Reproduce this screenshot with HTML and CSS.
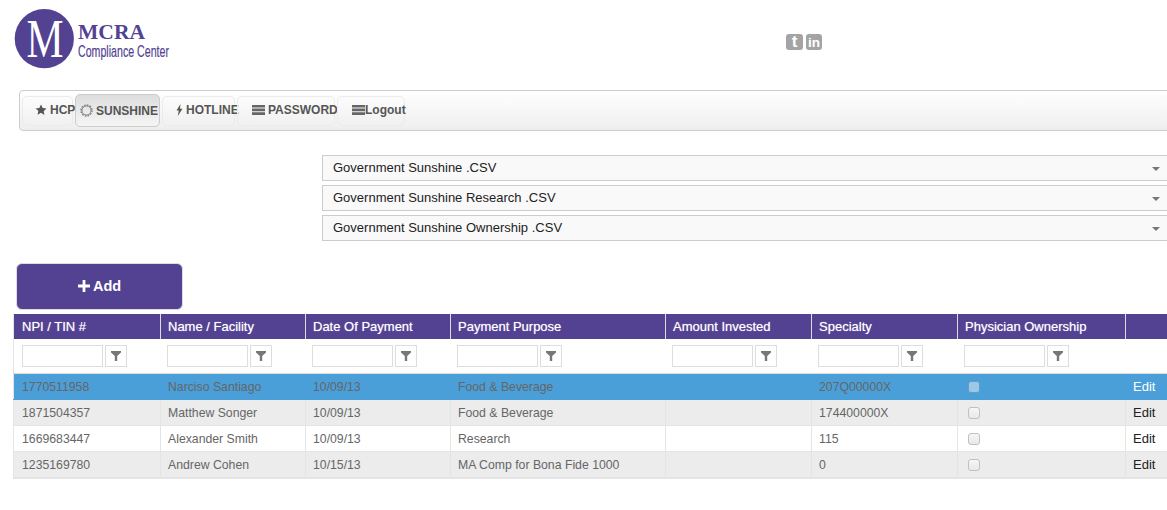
FILE: index.html
```html
<!DOCTYPE html>
<html lang="en">
<head>
  <meta charset="UTF-8">
  <title>MCRA Compliance Center</title>
  <link rel="stylesheet" href="styles.css">
</head>
<body>
  <header class="top">
    <svg class="logo" width="230" height="70" viewBox="0 0 230 70">
      <circle cx="44.3" cy="38.7" r="29.6" fill="#534292"/>
      <text x="45" y="57" text-anchor="middle" textLength="37" lengthAdjust="spacingAndGlyphs" font-family="Liberation Serif" font-size="54" fill="#fff">M</text>
      <text x="78" y="39" textLength="67" lengthAdjust="spacingAndGlyphs" font-family="Liberation Serif" font-weight="bold" font-size="20" fill="#534292">MCRA</text>
      <text x="78" y="56.5" textLength="91" lengthAdjust="spacingAndGlyphs" font-family="Liberation Sans" font-size="17" fill="#534292" stroke="#534292" stroke-width="0.2">Compliance Center</text>
    </svg>
    <div class="social">
      <span class="social-icon icon-twitter">t</span>
      <span class="social-icon icon-linkedin">in</span>
    </div>
  </header>

  <nav class="menu">
    <a class="menu-item item-hcp" href="#">
      <svg width="12" height="12" viewBox="0 0 12 12"><path d="M6 .5l1.7 3.6 3.8.5-2.8 2.6.7 3.9L6 8.8l-3.4 1.9.7-3.9L.5 4.6l3.8-.5z" fill="#555"/></svg>HCP
    </a>
    <a class="menu-item item-sunshine active" href="#">
      <svg width="13" height="13" viewBox="0 0 13 13"><circle cx="6.5" cy="6.5" r="4.6" fill="none" stroke="#777" stroke-width="1"/><circle cx="6.5" cy="6.5" r="5.6" fill="none" stroke="#777" stroke-width="1.2" stroke-dasharray="1.6 1.3"/></svg>SUNSHINE
    </a>
    <a class="menu-item item-hotline" href="#">
      <svg width="7" height="12" viewBox="0 0 7 12"><path d="M4.5 0L0.5 6.5h2.3L1.8 12 6.5 4.8H4z" fill="#555"/></svg>HOTLINE
    </a>
    <a class="menu-item item-password" href="#">
      <svg width="13" height="10" viewBox="0 0 13 10"><path d="M0 0h13v2.6H0zM0 3.6h13v2.6H0zM0 7.2h13V10H0z" fill="#666"/></svg>PASSWORD
    </a>
    <a class="menu-item item-logout" href="#">
      <svg width="13" height="10" viewBox="0 0 13 10"><path d="M0 0h13v2.6H0zM0 3.6h13v2.6H0zM0 7.2h13V10H0z" fill="#666"/></svg>Logout
    </a>
  </nav>

  <section class="exports">
    <div class="export-select">Government Sunshine .CSV<span class="caret"></span></div>
    <div class="export-select">Government Sunshine Research .CSV<span class="caret"></span></div>
    <div class="export-select">Government Sunshine Ownership .CSV<span class="caret"></span></div>
  </section>

  <button class="add-btn" type="button">
    <svg width="12" height="12" viewBox="0 0 12 12"><path d="M4.6 0h2.8v4.6H12v2.8H7.4V12H4.6V7.4H0V4.6h4.6z" fill="#fff"/></svg>Add
  </button>

  <table class="grid">
    <colgroup>
      <col class="col-npi"><col class="col-name"><col class="col-date"><col class="col-purpose">
      <col class="col-amount"><col class="col-spec"><col class="col-owner"><col class="col-edit">
    </colgroup>
    <thead>
      <tr>
        <th>NPI / TIN #</th>
        <th>Name / Facility</th>
        <th>Date Of Payment</th>
        <th>Payment Purpose</th>
        <th>Amount Invested</th>
        <th>Specialty</th>
        <th>Physician Ownership</th>
        <th></th>
      </tr>
      <tr class="filters">
        <td><div class="filter"><input type="text"><span class="filter-btn"><svg width="10" height="10" viewBox="0 0 10 10"><path d="M0 0h10v1.4L6.2 5v5H3.8V5L0 1.4z" fill="#777"/></svg></span></div></td>
        <td><div class="filter"><input type="text"><span class="filter-btn"><svg width="10" height="10" viewBox="0 0 10 10"><path d="M0 0h10v1.4L6.2 5v5H3.8V5L0 1.4z" fill="#777"/></svg></span></div></td>
        <td><div class="filter"><input type="text"><span class="filter-btn"><svg width="10" height="10" viewBox="0 0 10 10"><path d="M0 0h10v1.4L6.2 5v5H3.8V5L0 1.4z" fill="#777"/></svg></span></div></td>
        <td><div class="filter"><input type="text"><span class="filter-btn"><svg width="10" height="10" viewBox="0 0 10 10"><path d="M0 0h10v1.4L6.2 5v5H3.8V5L0 1.4z" fill="#777"/></svg></span></div></td>
        <td><div class="filter"><input type="text"><span class="filter-btn"><svg width="10" height="10" viewBox="0 0 10 10"><path d="M0 0h10v1.4L6.2 5v5H3.8V5L0 1.4z" fill="#777"/></svg></span></div></td>
        <td><div class="filter"><input type="text"><span class="filter-btn"><svg width="10" height="10" viewBox="0 0 10 10"><path d="M0 0h10v1.4L6.2 5v5H3.8V5L0 1.4z" fill="#777"/></svg></span></div></td>
        <td><div class="filter"><input type="text"><span class="filter-btn"><svg width="10" height="10" viewBox="0 0 10 10"><path d="M0 0h10v1.4L6.2 5v5H3.8V5L0 1.4z" fill="#777"/></svg></span></div></td>
        <td></td>
      </tr>
    </thead>
    <tbody>
      <tr class="selected">
        <td>1770511958</td><td>Narciso Santiago</td><td>10/09/13</td><td>Food &amp; Beverage</td><td></td><td>207Q00000X</td>
        <td><span class="check"></span></td><td class="edit">Edit</td>
      </tr>
      <tr class="alt">
        <td>1871504357</td><td>Matthew Songer</td><td>10/09/13</td><td>Food &amp; Beverage</td><td></td><td>174400000X</td>
        <td><span class="check"></span></td><td class="edit">Edit</td>
      </tr>
      <tr>
        <td>1669683447</td><td>Alexander Smith</td><td>10/09/13</td><td>Research</td><td></td><td>115</td>
        <td><span class="check"></span></td><td class="edit">Edit</td>
      </tr>
      <tr class="alt">
        <td>1235169780</td><td>Andrew Cohen</td><td>10/15/13</td><td>MA Comp for Bona Fide 1000</td><td></td><td>0</td>
        <td><span class="check"></span></td><td class="edit">Edit</td>
      </tr>
    </tbody>
  </table>
</body>
</html>
```

FILE: styles.css
```css
html, body {
  margin: 0;
  padding: 0;
  height: 510px;
  overflow: hidden;
}

body {
  width: 1167px;
  background: #fff;
  color: #666;
  font-family: "Liberation Sans", Arial, sans-serif;
  font-size: 12.25px;
}

/* Header */
.top {
  display: flex;
  align-items: flex-start;
  height: 90px;
}

.logo {
  display: block;
  flex: none;
}

.social {
  display: flex;
  gap: 3px;
  margin: 34px 0 0 556px;
}

.social-icon {
  height: 16px;
  border-radius: 3px;
  background: #a4a4a4;
  color: #fff;
  font-weight: bold;
  text-align: center;
}

.icon-twitter {
  width: 17px;
  font-size: 17px;
  line-height: 16px;
}

.icon-linkedin {
  width: 16px;
  font-size: 13.5px;
  line-height: 18px;
}

/* Menu */
.menu {
  display: flex;
  align-items: center;
  gap: 2px;
  box-sizing: border-box;
  width: 1160px;
  height: 41px;
  margin-left: 19px;
  padding-left: 2px;
  border: 1px solid #ccc;
  border-radius: 4px;
  background: linear-gradient(#fff, #eee);
}

.menu-item {
  display: flex;
  align-items: center;
  gap: 3px;
  box-sizing: border-box;
  height: 30px;
  padding-bottom: 2px;
  border: 1px solid #ebebeb;
  border-radius: 5px;
  color: #555;
  font-size: 12px;
  font-weight: bold;
  text-decoration: none;
  white-space: nowrap;
}

.menu-item svg {
  flex: none;
}

.menu-item.active {
  height: 33px;
  padding-bottom: 0;
  border-color: #ccc;
  background: linear-gradient(#ddd, #f5f5f5);
}

.item-hcp { width: 51px; padding-left: 12px; }
.item-sunshine { width: 85px; padding-left: 4px; }
.item-hotline { width: 73px; padding-left: 13px; }
.item-password { width: 98px; padding-left: 14px; }
.item-logout { width: 68px; padding-left: 14px; gap: 0; }

/* Export dropdowns */
.exports {
  display: flex;
  flex-direction: column;
  gap: 4px;
  margin: 24px -10px 0 322px;
}

.export-select {
  position: relative;
  box-sizing: border-box;
  height: 26px;
  padding-left: 10px;
  border: 1px solid #ccc;
  background: #f9f9f9;
  color: #222;
  font-size: 13px;
  line-height: 24px;
}

.caret {
  position: absolute;
  top: 11px;
  right: 16px;
  border-top: 4px solid #777;
  border-left: 4px solid transparent;
  border-right: 4px solid transparent;
}

/* Add button */
.add-btn {
  display: flex;
  align-items: center;
  justify-content: center;
  gap: 3px;
  box-sizing: border-box;
  width: 167px;
  height: 47px;
  margin: 22px 0 4px 16px;
  padding: 0 0 2px;
  border: 1px solid #ddd;
  border-radius: 6px;
  background: #534292;
  color: #fff;
  font-family: inherit;
  font-size: 14.5px;
  font-weight: bold;
}

/* Grid */
.grid {
  width: 1167px;
  margin-left: 13px;
  border-collapse: collapse;
  table-layout: fixed;
  border-left: 1px solid #e4e4e4;
  border-bottom: 2px solid #e4e4e4;
}

.col-npi { width: 147px; }
.col-name { width: 145px; }
.col-date { width: 145px; }
.col-purpose { width: 215px; }
.col-amount { width: 146px; }
.col-spec { width: 146px; }
.col-owner { width: 168px; }

.grid th {
  height: 25px;
  padding: 0 7px;
  border-right: 1px solid #ddd;
  background: #534292;
  color: #fff;
  font-size: 13px;
  font-weight: normal;
  text-align: left;
  text-shadow: 0 0 1px rgba(255, 255, 255, 0.6);
}

.grid td {
  height: 25px;
  padding: 0 7px;
  border-right: 1px solid #e4e4e4;
  border-bottom: 1px solid #e4e4e4;
}

.grid .filters td {
  height: 34px;
  padding-left: 6px;
  border-right: 0;
  border-bottom: 1px solid #ddd;
}

.grid th:first-child,
.grid td:first-child,
.grid .filters td:first-child {
  padding-left: 8px;
}

.filter {
  display: flex;
  gap: 2px;
}

.filter input {
  box-sizing: border-box;
  width: 81px;
  height: 22px;
  margin: 0;
  padding: 0;
  border: 1px solid #ddd;
  background: #fff;
}

.filter-btn {
  display: flex;
  align-items: center;
  justify-content: center;
  box-sizing: border-box;
  width: 22px;
  height: 22px;
  border: 1px solid #ddd;
}

.grid .alt td {
  background: #ececec;
}

.grid .selected td {
  background: #4a9fd8;
  border-color: #4a9fd8;
}

.grid .edit {
  color: #222;
  font-size: 13px;
}

.grid .selected .edit {
  color: #fff;
}

.check {
  display: block;
  box-sizing: border-box;
  width: 12px;
  height: 12px;
  margin-left: 3px;
  border: 1px solid #c0c0c0;
  border-radius: 3px;
  background: linear-gradient(#f6f6f6, #e8e8e8);
}

.selected .check {
  border-color: #5f9fca;
  background: #9cc8e6;
}
```
